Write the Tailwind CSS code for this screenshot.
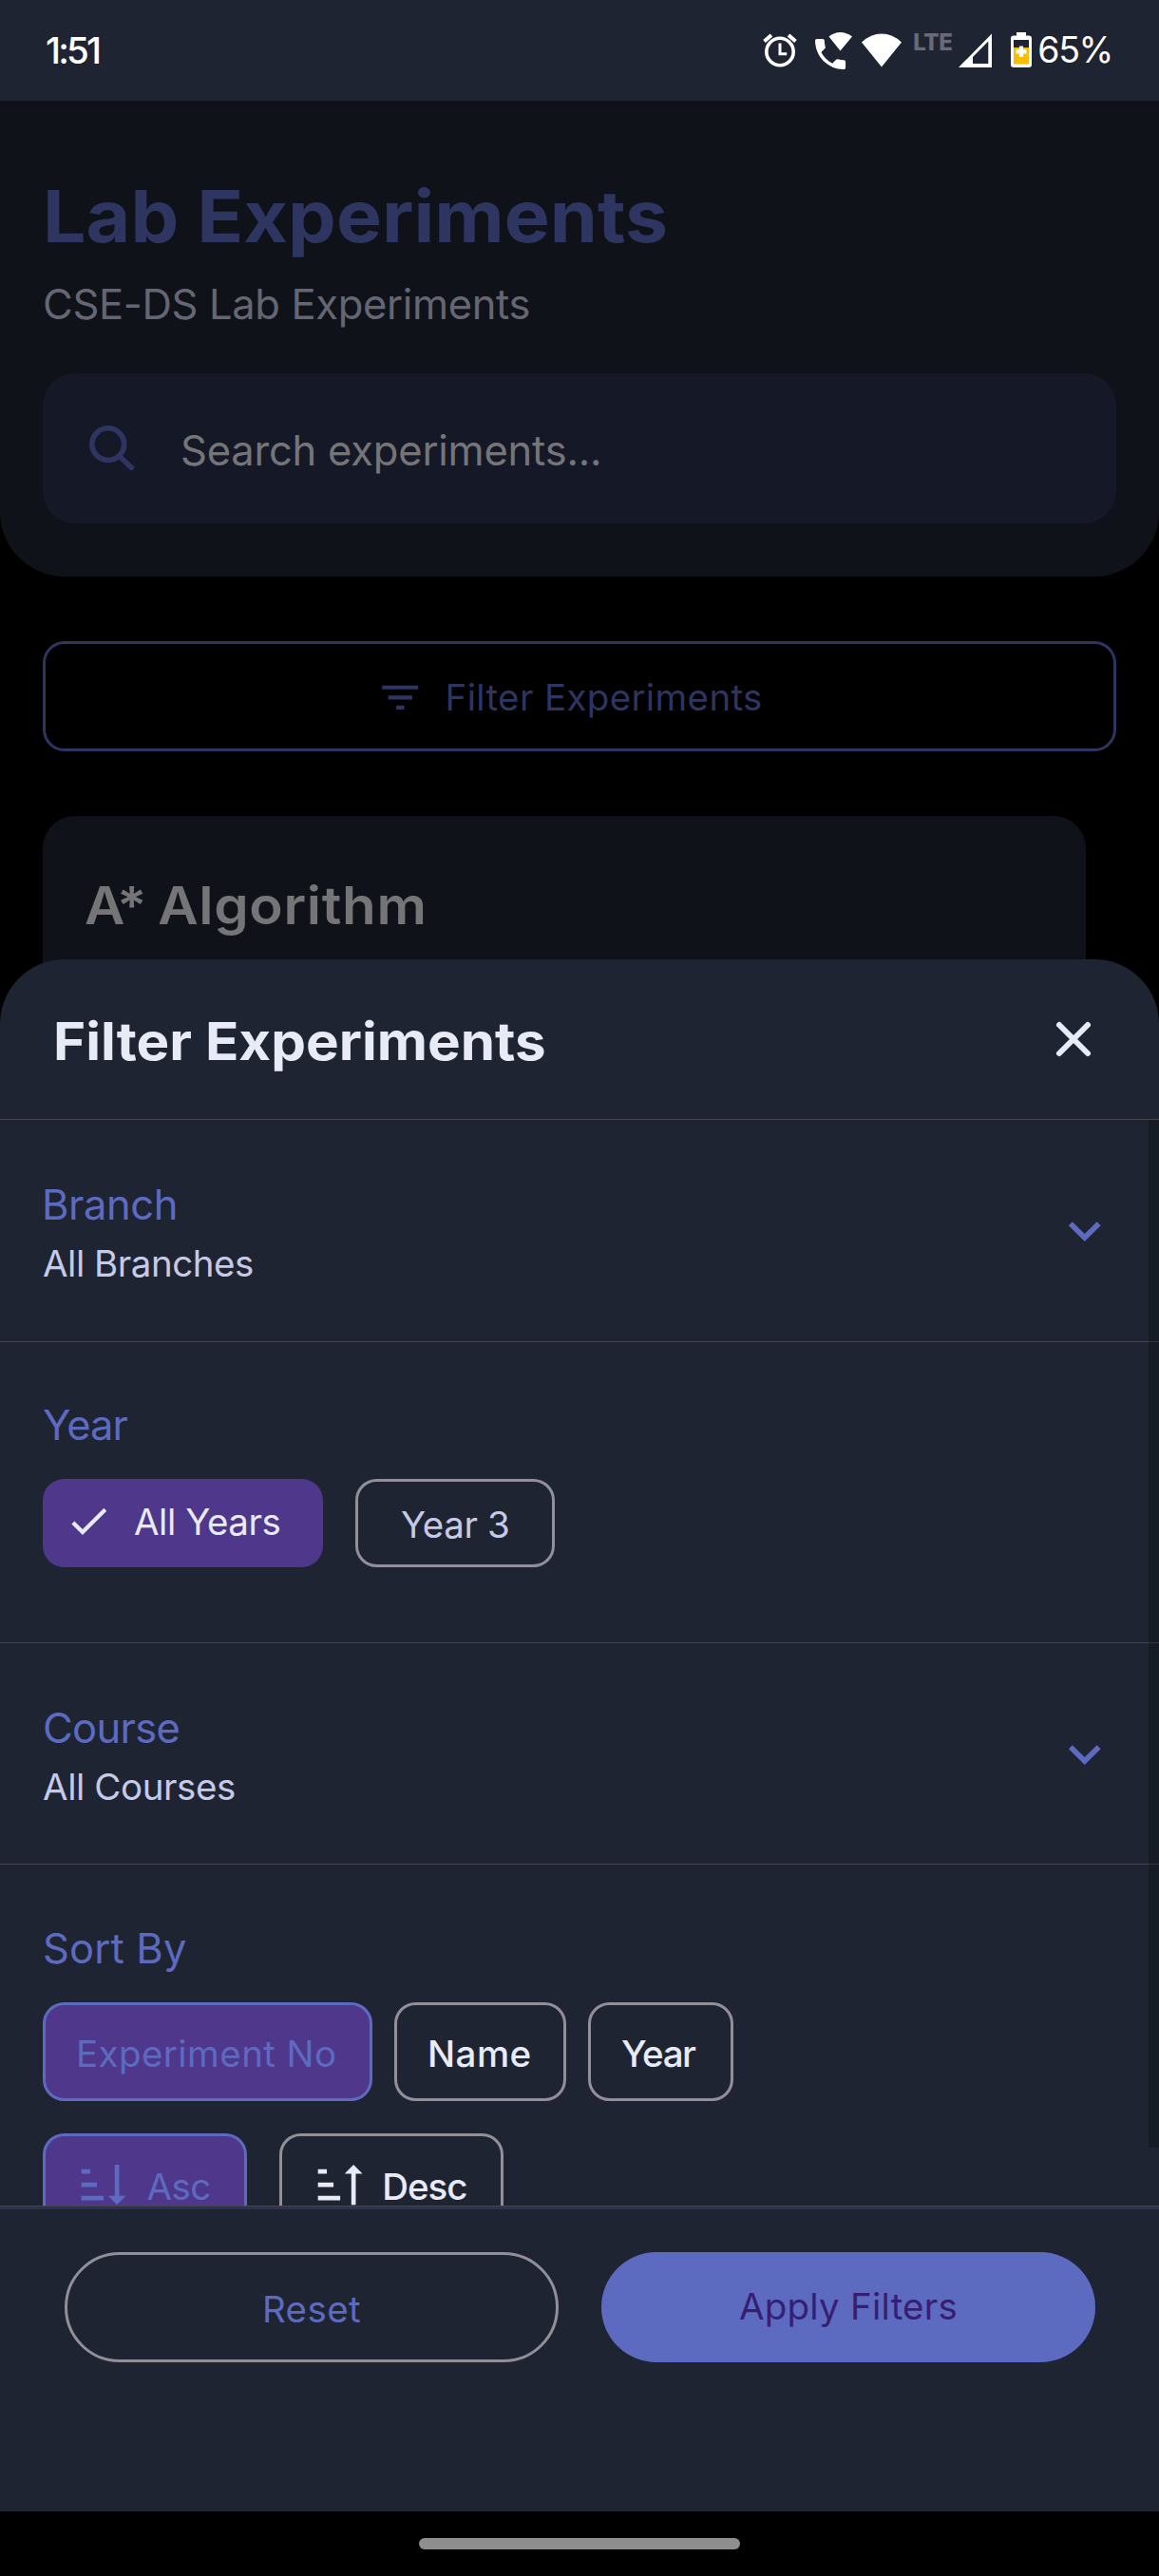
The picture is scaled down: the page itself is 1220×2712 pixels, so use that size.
<!DOCTYPE html>
<html lang="en">
<head>
<meta charset="utf-8">
<title>Lab Experiments</title>
<script src="https://cdn.jsdelivr.net/npm/@tailwindcss/browser@4"></script>
</head>
<body class="bg-black">
<div class="relative w-[1220px] h-[2712px] bg-black overflow-hidden font-['Inter',sans-serif] leading-none whitespace-nowrap">

  <!-- Status bar -->
  <header class="h-[106px] bg-[#1f2433] flex items-start justify-between text-white">
    <div class="pl-[48px] pt-[34px] text-[38.5px] leading-none font-medium tracking-[-2.8px]">1:51</div>
    <div class="flex items-start pt-[30px] pr-[49px]">
      <svg class="w-[40px] h-[44px] mr-[14px]" viewBox="801 30 40 44" fill="none" stroke="#fff"><circle cx="821" cy="54.5" r="14.2" stroke-width="3.6"/><path d="M804.5 43.5l7.500-6.500M837.500 43.500l-7.500-6.500" stroke-width="4"/><path d="M821 45.500v11.200h7.200" stroke-width="3"/></svg>
      <svg class="w-[44px] h-[46px] mr-[6px]" viewBox="855 30 44 46" fill="#fff"><path transform="translate(852.700 35.700) scale(1.780)" d="M20,15.500C18.800,15.500 17.500,15.300 16.400,14.900C16.100,14.800 15.700,14.900 15.400,15.200L13.200,17.400C10.400,15.900 8,13.600 6.600,10.800L8.800,8.600C9.100,8.300 9.200,7.900 9,7.600C8.700,6.500 8.500,5.200 8.500,4C8.500,3.500 8,3 7.500,3H4C3.500,3 3,3.500 3,4C3,13.400 10.600,21 20,21C20.500,21 21,20.500 21,20V16.500C21,16 20.500,15.500 20,15.500Z"/><path d="M884.500 53.500L872.500 38.500Q878 34 884.500 34T897 38.500Z"/></svg>
      <svg class="w-[46px] h-[44px] mr-[10px]" viewBox="905 30 46 44" fill="#fff"><path d="M928 70.500L907 44.500Q916.500 35.500 928 35.500T949 44.500Z"/></svg>
      <div class="w-[47px] pt-[2.500px] text-[24px] leading-none font-extrabold tracking-[-0.400px] text-[#686b75]">LTE</div>
      <svg class="w-[38px] h-[44px] mr-[17px]" viewBox="1008 30 38 44" fill="#fff" fill-rule="evenodd"><path d="M1009 71L1044 35.500V71ZM1024 60V67H1040.300V43.500Z"/></svg>
      <svg class="w-[24px] h-[44px]" viewBox="1063 30 24 44"><rect x="1070" y="34" width="10" height="6" fill="#fff"/><rect x="1064" y="37.500" width="22" height="33.500" rx="3" fill="#fff"/><rect x="1067" y="42" width="16" height="8" fill="#1f2433"/><rect x="1067" y="50" width="16" height="17.500" fill="#fbbc04"/><path d="M1075 48.500v11.500M1069.500 54.300h11" stroke="#fff" stroke-width="4.200"/></svg>
      <div class="pl-[5px] pt-[4px] text-[37.500px] leading-none tracking-[-1.400px]">65%</div>
    </div>
  </header>

  <!-- Dimmed page -->
  <main>
    <section class="h-[501px] bg-[#0f1219] rounded-b-[68px] px-[45px] pt-[83px]">
      <h1 class="origin-left scale-x-[1.061] text-[76px] leading-none font-bold text-[#2e3561]">Lab Experiments</h1>
      <p class="mt-[34px] text-[43.500px] leading-none tracking-[-0.340px] text-[#656673]">CSE-DS Lab Experiments</p>
      <div class="mt-[50px] h-[158px] w-[1130px] rounded-[34px] bg-[#151826] flex items-start">
        <svg class="ml-[47px] mt-[53px] w-[52px] h-[52px]" viewBox="92 446 52 52" fill="none" stroke="#2e3561" stroke-width="5.600" stroke-linecap="round"><circle cx="113.800" cy="467.600" r="16.900"/><path d="M126 480.500L138.300 492.300"/></svg>
        <span class="ml-[46px] mt-[60px] text-[43.500px] leading-none tracking-[-0.210px] text-[#757578]">Search experiments...</span>
      </div>
    </section>

    <div class="mt-[68px] mx-[45px] h-[116px] border-[3px] border-[#2e3561] rounded-[23px] flex items-start pl-[348px] text-[#2e3561]">
      <svg class="mt-[31px] w-[50.600px] h-[50.600px]" viewBox="0 0 24 24" fill="currentColor"><path d="M6,13H18V11H6M3,6V8H21V6M10,18H14V16H10V18Z"/></svg>
      <span class="ml-[22px] mt-[37px] text-[38.500px] leading-none tracking-[0.340px]">Filter Experiments</span>
    </div>

    <article class="mt-[68px] ml-[45px] w-[1098px] h-[260px] bg-[#0f1219] rounded-[34px] pl-[44px] pt-[67px]">
      <h2 class="origin-left scale-x-[1.061] text-[55px] leading-none font-semibold tracking-[0.600px] [word-spacing:-4px] text-[#757578]"><span class="tracking-[-8px]">A</span>* Algorithm</h2>
    </article>
  </main>

  <!-- Filter bottom sheet -->
  <div class="absolute inset-x-0 top-[1010px] h-[1634px] bg-[#1f2433] rounded-t-[68px] overflow-hidden flex flex-col">
    <div class="h-[169px] shrink-0 border-b border-[#49454f] flex justify-between items-start pl-[56px] pr-[70px]">
      <h2 class="mt-[59px] origin-left scale-x-[1.061] text-[55px] leading-none font-bold text-[#e8eaf6]">Filter Experiments</h2>
      <svg class="mt-[64px] w-[40px] h-[40px]" viewBox="0 0 40 40" fill="none" stroke="#e8eaf6" stroke-width="6" stroke-linecap="round"><path d="M5 5L35 35M35 5L5 35"/></svg>
    </div>

    <div class="relative h-[1143px] shrink-0 overflow-hidden">
      <section class="h-[234px] border-b border-[#49454f] flex justify-between items-start pl-[45px] pr-[45px]">
        <div class="pt-[67.500px]">
          <h3 class="-ml-[1px] text-[43.500px] leading-none tracking-[-0.420px] text-[#5c6bc0]">Branch</h3>
          <p class="mt-[21px] text-[38.500px] leading-none tracking-[-0.480px] text-[#c5cae9]">All Branches</p>
        </div>
        <svg class="mt-[83px] w-[67.500px] h-[67.500px]" viewBox="0 0 24 24" fill="#5c6bc0"><path d="M7.410,8.580L12,13.170L16.590,8.580L18,10L12,16L6,10L7.410,8.580Z"/></svg>
      </section>

      <section class="h-[317px] border-b border-[#49454f] pl-[45px] pt-[65.500px]">
        <h3 class="text-[43.500px] leading-none tracking-[-0.970px] text-[#5c6bc0]">Year</h3>
        <div class="mt-[35px] flex gap-[34px]">
          <div class="w-[295px] h-[93px] rounded-[22.500px] bg-[#4f378b] flex items-start">
            <svg class="ml-[22.500px] mt-[18.500px] w-[50.600px] h-[50.600px]" viewBox="0 0 24 24" fill="#e8eaf6"><path d="M21,7L9,19L3.500,13.500L4.910,12.090L9,16.170L19.590,5.590L21,7Z"/></svg>
            <span class="ml-[22.900px] mt-[26px] text-[38.500px] leading-none tracking-[-0.460px] text-[#e8eaf6]">All Years</span>
          </div>
          <div class="w-[210px] h-[93px] rounded-[22.500px] border-[3px] border-[#938f99] pl-[45px] pt-[26px] text-[38.500px] leading-none tracking-[-0.400px] text-[#c5cae9]">Year 3</div>
        </div>
      </section>

      <section class="h-[233px] border-b border-[#49454f] flex justify-between items-start pl-[45px] pr-[45px]">
        <div class="pt-[67.500px]">
          <h3 class="text-[43.500px] leading-none tracking-[-0.680px] text-[#5c6bc0]">Course</h3>
          <p class="mt-[21px] text-[38.500px] leading-none tracking-[-0.430px] text-[#c5cae9]">All Courses</p>
        </div>
        <svg class="mt-[83px] w-[67.500px] h-[67.500px]" viewBox="0 0 24 24" fill="#5c6bc0"><path d="M7.410,8.580L12,13.170L16.590,8.580L18,10L12,16L6,10L7.410,8.580Z"/></svg>
      </section>

      <section class="pl-[45px] pt-[66.500px]">
        <h3 class="text-[43.500px] leading-none tracking-[0.170px] text-[#5c6bc0]">Sort By</h3>
        <div class="mt-[35px] flex gap-[23px] text-[38.500px] leading-none text-[#e8eaf6]">
          <div class="w-[347px] h-[104px] rounded-[22.500px] border-[3px] border-[#5c6bc0] bg-[#4f378b] pl-[32px] pt-[32px] tracking-[0.420px] text-[#5c6bc0]">Experiment No</div>
          <div class="w-[181px] h-[104px] rounded-[22.500px] border-[3px] border-[#938f99] pl-[32px] pt-[32px] font-medium tracking-[0.450px]">Name</div>
          <div class="w-[153px] h-[104px] rounded-[22.500px] border-[3px] border-[#938f99] pl-[32px] pt-[32px] font-medium tracking-[-1.400px]">Year</div>
        </div>
        <div class="mt-[34px] flex gap-[34px] text-[38.500px] leading-none">
          <div class="w-[215px] h-[104px] rounded-[22.500px] border-[3px] border-[#5c6bc0] bg-[#4f378b] flex items-start text-[#5c6bc0]">
            <svg class="ml-[33.300px] mt-[23.300px] w-[56.200px] h-[56.200px]" viewBox="0 0 24 24" fill="currentColor"><path d="M19 17H22L18 21L14 17H17V3H19M2 17H12V19H2M6 5V7H2V5M2 11H9V13H2V11Z"/></svg>
            <span class="ml-[17px] mt-[34px] tracking-[-0.500px]">Asc</span>
          </div>
          <div class="w-[236px] h-[104px] rounded-[22.500px] border-[3px] border-[#938f99] flex items-start text-[#e8eaf6]">
            <svg class="ml-[33px] mt-[23.300px] w-[56.200px] h-[56.200px]" viewBox="0 0 24 24" fill="currentColor"><path d="M19 7H22L18 3L14 7H17V21H19M2 17H12V19H2M6 5V7H2V5M2 11H9V13H2V11Z"/></svg>
            <span class="ml-[16px] mt-[34px] font-medium tracking-[-1.040px]">Desc</span>
          </div>
        </div>
      </section>

      <!-- Scroll indicator -->
      <div class="absolute right-0 top-0 w-[11px] h-[1082px] bg-black/25"></div>
    </div>

    <footer class="flex-1 border-t border-[#49454f]">
      <div class="h-[3px] bg-[#2c3254]"></div>
      <div class="flex gap-[45px] pl-[68px] pt-[45px] text-[38.500px] leading-none">
        <div class="w-[520px] h-[116px] rounded-full border-[3px] border-[#938f99] flex justify-center pt-[38px] tracking-[0.390px] text-[#5c6bc0]">Reset</div>
        <div class="w-[520px] h-[116px] rounded-full bg-[#5c6bc0] flex justify-center pt-[38px] tracking-[0.230px] text-[#381e72]">Apply Filters</div>
      </div>
    </footer>
  </div>

  <!-- Gesture bar -->
  <div class="absolute inset-x-0 bottom-0 h-[68px] bg-black flex justify-center pt-[28px]">
    <div class="w-[338px] h-[12px] rounded-full bg-[#8e8e8e]"></div>
  </div>
</div>
</body>
</html>
